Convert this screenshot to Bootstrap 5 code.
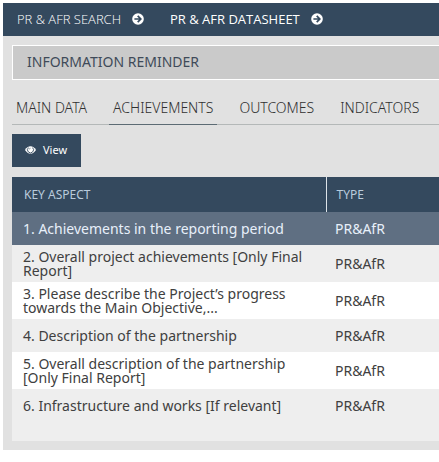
<!DOCTYPE html>
<html lang="en">
<head>
<meta charset="utf-8">
<meta name="viewport" content="width=device-width, initial-scale=1">
<title>PR &amp; AFR Datasheet</title>
<link href="https://cdn.jsdelivr.net/npm/bootstrap@5.3.0/dist/css/bootstrap.min.css" rel="stylesheet">
<style>
body { font-family: "Open Sans", "Noto Sans", sans-serif; font-size: 14px; line-height: 14px; color: #404040; background: #fff; overflow-x: hidden; }
.app-panel { background: #e1e1e1; margin: 3px 0 0 3px; padding-bottom: 9px; }
.top-bar { background: #34495e; padding: 0 14px 2px; height: 33px; gap: 26px; font-size: 13px; }
.top-bar a { color: #fff; gap: 11px; font-weight: 300; }
.top-bar a.active { font-weight: 400; }
.panel-body { padding: 9px 0 0 9px; }
.reminder { background: #cacaca; border: 1px solid #fff; border-right: 0; height: 35px; padding: 0 14px 2px; font-family: "Noto Sans", sans-serif; font-size: 14px; color: #3f4a59; }
.section-tabs { margin-top: 11px; border-bottom: 1px solid #b4b8b8; font-family: "Noto Sans", sans-serif; font-size: 14px; font-weight: 300; gap: 18px; }
.section-tabs a { color: #303030; padding: 10px 4px 9px; border-bottom: 1px solid transparent; margin-bottom: -1px; white-space: nowrap; }
.section-tabs a.active { border-bottom-color: #5c6b74; }
.view-btn { --bs-btn-bg: #34495e; --bs-btn-hover-bg: #2b3d4f; --bs-btn-color: #fff; --bs-btn-hover-color: #fff; --bs-btn-font-family: "Noto Sans", sans-serif; --bs-btn-font-size: 11px; --bs-btn-border-width: 0; height: 33px; padding: 0 14px 1px 13px; margin: 9px 0 10px; gap: 7px; }
.aspects { --bs-table-bg: transparent; font-family: "Noto Sans", sans-serif; color: #404040; table-layout: fixed; line-height: 14px; }
.aspects td { border: 0; padding: 0 9px; height: 33px; }
.aspects tbody td:first-child { padding: 4px 11px; }
.aspects thead th { background: #34495e; color: #b9cbdc; font-size: 12px; font-weight: 400; height: 35px; border: 0; padding: 1px 12px 0; vertical-align: middle; }
.aspects thead th + th { border-left: 1px solid #dde3e8; padding-left: 10px; }
.aspects .col-aspect { width: 314px; }
.aspects tbody tr { background: #eee; }
.aspects tbody tr:nth-child(odd) { background: #fff; }
.aspects tbody tr.selected { background: #5f6f82; }
.aspects tbody tr.selected > * { color: #e8f0fa; }
.aspects tbody tr.two-line > * { height: 37px; }
.table-foot { background: #eee; height: 19px; }
</style>
</head>
<body>
<main class="app-panel">
  <nav class="top-bar d-flex align-items-center" aria-label="Main">
    <a class="d-flex align-items-center text-decoration-none text-nowrap" href="#">PR &amp; AFR SEARCH
      <svg width="12" height="12" viewBox="0 0 12 12" aria-hidden="true"><circle cx="6" cy="6" r="5.8" fill="#fff"/><path d="M2.4 6h6M5.7 2.9 8.8 6 5.7 9.1" fill="none" stroke="#34495e" stroke-width="1.7"/></svg></a>
    <a class="active d-flex align-items-center text-decoration-none text-nowrap" href="#">PR &amp; AFR DATASHEET
      <svg width="12" height="12" viewBox="0 0 12 12" aria-hidden="true"><circle cx="6" cy="6" r="5.8" fill="#fff"/><path d="M2.4 6h6M5.7 2.9 8.8 6 5.7 9.1" fill="none" stroke="#34495e" stroke-width="1.7"/></svg></a>
  </nav>
  <div class="panel-body">
    <div class="reminder d-flex align-items-center">INFORMATION REMINDER</div>
    <nav class="section-tabs d-flex" aria-label="Sections">
      <a class="text-decoration-none" href="#">MAIN DATA</a>
      <a class="text-decoration-none active" href="#">ACHIEVEMENTS</a>
      <a class="text-decoration-none" href="#">OUTCOMES</a>
      <a class="text-decoration-none" href="#">INDICATORS</a>
    </nav>
    <button type="button" class="btn view-btn rounded-0 d-flex align-items-center">
      <svg width="11" height="8" viewBox="0 0 11 8" aria-hidden="true"><path d="M0 4Q2.300.3 5.500.3T11 4Q8.700 7.700 5.500 7.700T0 4Z" fill="#fff"/><path d="M3.500 1.600A3 3 0 1 0 7.500 1.600" fill="none" stroke="#34495e" stroke-width=".9"/><path d="M4.300 3.400Q4.400 2.300 5.500 2.200" fill="none" stroke="#34495e" stroke-width=".6"/></svg>
      View</button>
    <table class="table aspects mb-0 align-middle">
      <thead><tr><th scope="col" class="col-aspect">KEY ASPECT</th><th scope="col">TYPE</th></tr></thead>
      <tbody>
        <tr class="selected"><td>1. Achievements in the reporting period</td><td>PR&amp;AfR</td></tr>
        <tr class="two-line"><td>2. Overall project achievements [Only Final Report]</td><td>PR&amp;AfR</td></tr>
        <tr class="two-line"><td>3. Please describe the Project’s progress towards the Main Objective,...</td><td>PR&amp;AfR</td></tr>
        <tr><td>4. Description of the partnership</td><td>PR&amp;AfR</td></tr>
        <tr class="two-line"><td>5. Overall description of the partnership [Only Final Report]</td><td>PR&amp;AfR</td></tr>
        <tr><td>6. Infrastructure and works [If relevant]</td><td>PR&amp;AfR</td></tr>
      </tbody>
    </table>
    <div class="table-foot"></div>
  </div>
</main>
<script src="https://cdn.jsdelivr.net/npm/bootstrap@5.3.0/dist/js/bootstrap.bundle.min.js"></script>
</body>
</html>
